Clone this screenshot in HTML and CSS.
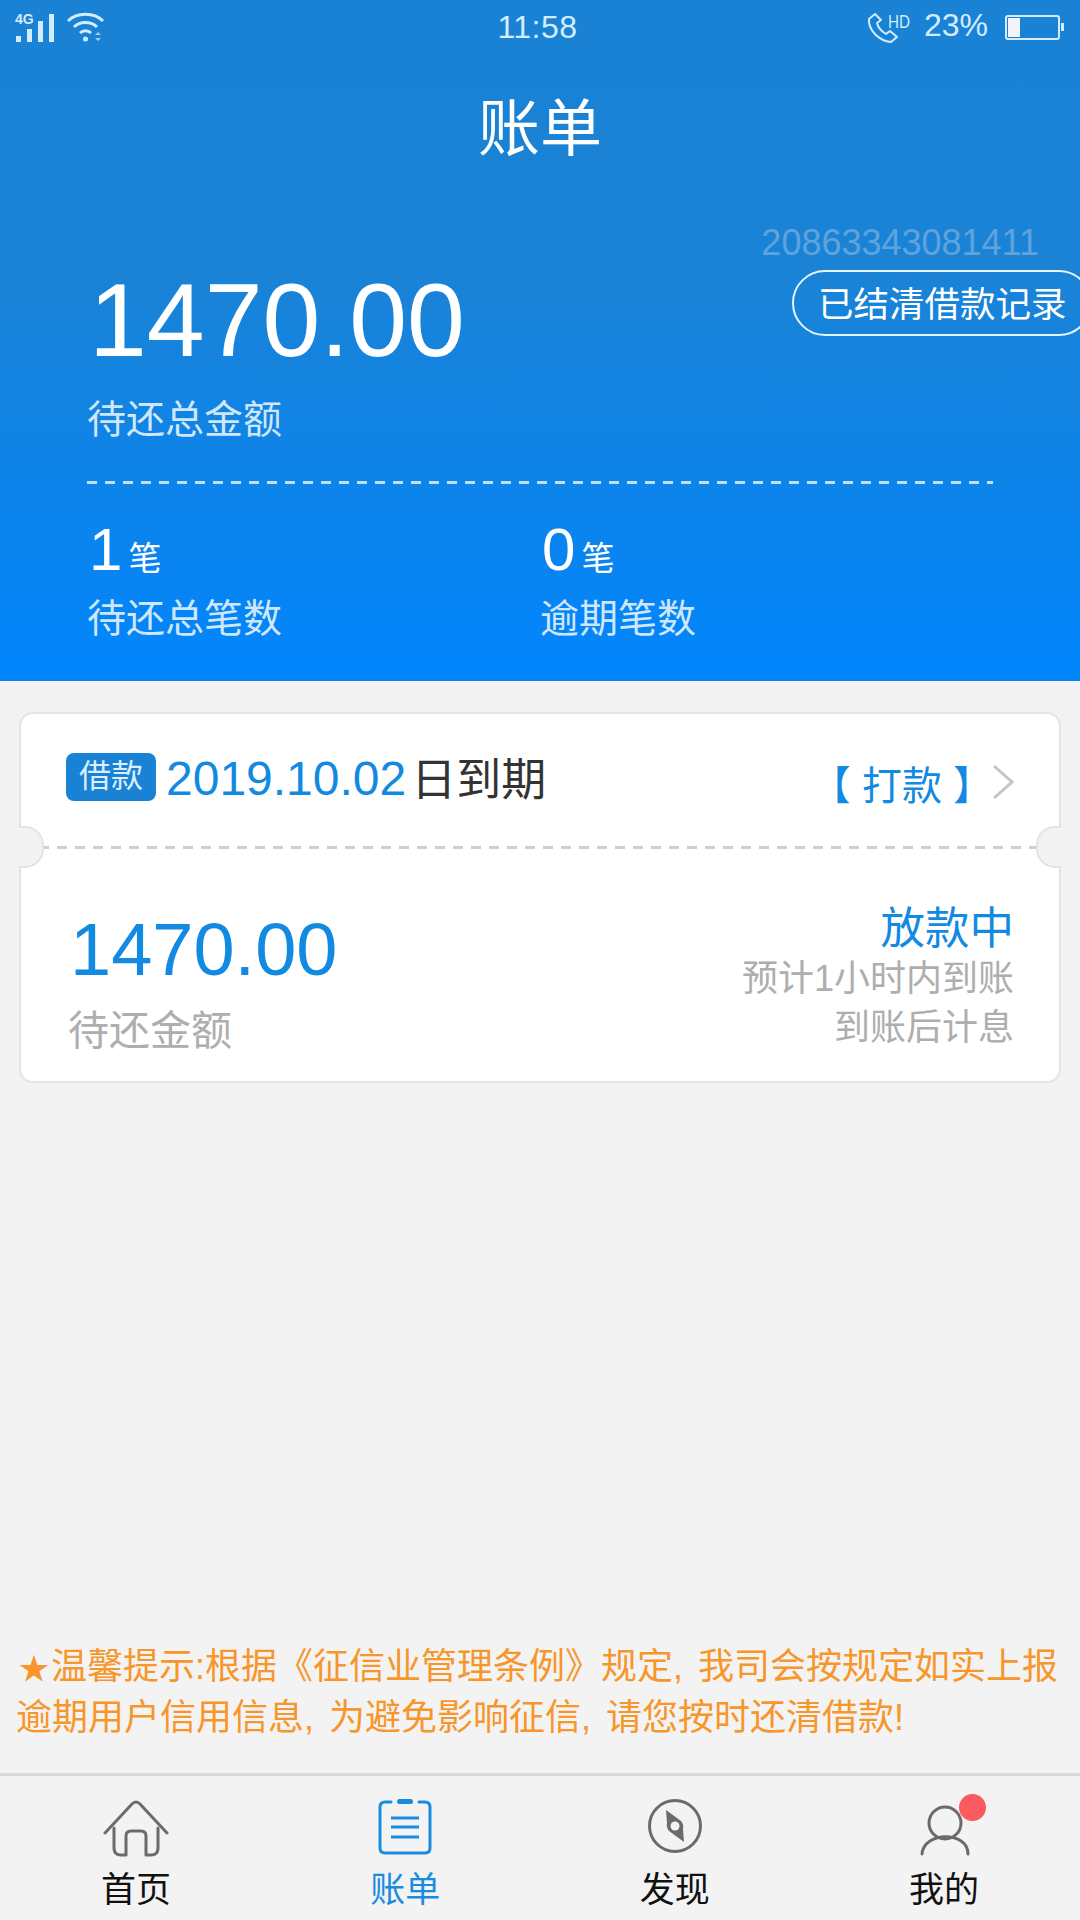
FILE: index.html
```html
<!DOCTYPE html>
<html lang="en">
<head>
<meta charset="UTF-8">
<meta name="viewport" content="width=device-width, initial-scale=1.0">
<title>账单</title>
<link rel="stylesheet" href="styles.css">
</head>
<body>
<div class="page">
    <header class="header">
        <div class="status-bar">
            <div class="status-left">
                <svg width="42" height="32" viewBox="0 0 42 32" fill="#d4ecff">
                    <text x="0" y="12" class="net-label">4G</text>
                    <rect x="1" y="24" width="5" height="6"/>
                    <rect x="12" y="17" width="5" height="13"/>
                    <rect x="23" y="9" width="5" height="21"/>
                    <rect x="34" y="2" width="5" height="28"/>
                </svg>
                <svg class="icon-wifi" width="38" height="32" viewBox="0 0 38 32" fill="none" stroke="#d4ecff" stroke-width="3">
                    <path d="M1 9C10 0 27 0 36 9"/>
                    <path d="M7 15C13 9 24 9 30 15"/>
                    <path d="M13 21C16 18 21 18 24 21"/>
                    <circle cx="18.500" cy="27" r="2.500" fill="#d4ecff" stroke="none"/>
                    <path d="M28 23l3-3 3 3zM28 26l3 3 3-3z" fill="#9fd0f5" stroke="none"/>
                </svg>
            </div>
            <div class="status-time">11:58</div>
            <div class="status-right">
                <svg width="52" height="32" viewBox="0 0 52 32" fill="none" stroke="#d4ecff" stroke-width="2">
                    <path d="M8 2L2 7C1 18 12 29 24 30L30 25L23 19L19 22C14 19 11 15 10 11L14 8Z" stroke-linejoin="round"/>
                    <text x="21" y="16" class="hd-label" textLength="22" lengthAdjust="spacingAndGlyphs">HD</text>
                </svg>
                <span class="battery-text">23%</span>
                <div class="battery"><div class="battery-fill"></div></div>
            </div>
        </div>
        <h1 class="title">账单</h1>
        <div class="hero">
            <div class="hero-left">
                <div class="hero-amount">1470.00</div>
                <div class="label">待还总金额</div>
            </div>
            <div class="hero-right">
                <div class="serial">20863343081411</div>
                <div class="pill">已结清借款记录</div>
            </div>
        </div>
        <div class="dash-line"></div>
        <div class="stats">
            <div class="stat">
                <div class="stat-value"><span class="stat-num">1</span><span class="stat-unit">笔</span></div>
                <div class="label">待还总笔数</div>
            </div>
            <div class="stat">
                <div class="stat-value"><span class="stat-num">0</span><span class="stat-unit">笔</span></div>
                <div class="label">逾期笔数</div>
            </div>
        </div>
    </header>

    <main class="main">
        <div class="card">
            <div class="card-top">
                <span class="tag">借款</span>
                <span class="due-date">2019.10.02</span>
                <span class="due-text">日到期</span>
                <span class="pay">【 打款 】</span>
                <svg class="chevron" width="22" height="36" viewBox="0 0 22 36" fill="none" stroke="#c4c4c4" stroke-width="3">
                    <path d="M2 2L20 18L2 34"/>
                </svg>
            </div>
            <div class="card-split"></div>
            <div class="card-bottom">
                <div>
                    <div class="card-amount">1470.00</div>
                    <div class="card-label">待还金额</div>
                </div>
                <div class="card-state">
                    <div class="state-title">放款中</div>
                    <div class="state-note">预计1小时内到账</div>
                    <div class="state-note">到账后计息</div>
                </div>
            </div>
        </div>
        <p class="notice"><span class="star">★</span>温馨提示:根据《征信业管理条例》规定, 我司会按规定如实上报<br>逾期用户信用信息, 为避免影响征信, 请您按时还清借款!</p>
    </main>

    <nav class="tabbar">
        <div class="tab">
            <svg width="66" height="60" viewBox="0 0 66 60" fill="none" stroke="#6b6b6b" stroke-width="3" stroke-linecap="round" stroke-linejoin="round">
                <path d="M2 35L29 6Q33 2 37 6L64 35"/>
                <path d="M11 30V50Q11 57 18 57H23V38Q23 33 28 33H38Q43 33 43 38V57H48Q55 57 55 50V30"/>
            </svg>
            <span>首页</span>
        </div>
        <div class="tab tab-active">
            <svg width="66" height="60" viewBox="0 0 66 60" fill="none" stroke="#1a8ce0" stroke-width="3" stroke-linecap="round">
                <path d="M19 4H13Q8 4 8 9V50Q8 55 13 55H53Q58 55 58 50V9Q58 4 53 4H47"/>
                <rect x="25" y="1" width="16" height="5" rx="2.500" fill="#1a8ce0" stroke-width="0"/>
                <path d="M19 20H47M19 29H47M19 39H47" stroke-linecap="butt" stroke-width="3"/>
            </svg>
            <span>账单</span>
        </div>
        <div class="tab">
            <svg width="66" height="60" viewBox="0 0 66 60" fill="none" stroke="#6b6b6b" stroke-width="3">
                <circle cx="33" cy="28" r="25.500"/>
                <path d="M24 12L39 23Q42 27 41 31L42 44L27 33Q24 29 25 25Z" fill="#6b6b6b" stroke="none"/>
                <circle cx="33" cy="28" r="4.500" fill="#f3f3f3" stroke="none"/>
            </svg>
            <span>发现</span>
        </div>
        <div class="tab">
            <svg width="66" height="60" viewBox="0 0 66 60" fill="none" stroke="#6b6b6b" stroke-width="3" stroke-linecap="round">
                <circle cx="34" cy="25" r="16"/>
                <path d="M11 56C13 33 57 33 57 56"/>
            </svg>
            <span class="dot"></span>
            <span>我的</span>
        </div>
    </nav>
</div>
</body>
</html>
```

FILE: styles.css
```css
* {
    box-sizing: border-box;
}
html, body {
    margin: 0;
    padding: 0;
}
body {
    background-color: #f3f3f3;
    font-family: "Liberation Sans", "Noto Sans CJK SC", sans-serif;
}
.page {
    width: 1080px;
    height: 1920px;
    display: flex;
    flex-direction: column;
    overflow: hidden;
}

/* blue header */
.header {
    height: 681px;
    padding: 0 0 0 87px;
    background: linear-gradient(180deg, #1a82d4 0%, #1a83d6 40%, #0185fd 100%);
    color: #fff;
}
.status-bar {
    height: 54px;
    margin-left: -87px;
    padding: 12px 20px 0 15px;
    display: flex;
    justify-content: space-between;
    color: #d4ecff;
}
.status-left {
    width: 200px;
    display: flex;
    align-items: flex-start;
}
.net-label {
    font-size: 14px;
    font-weight: bold;
}
.icon-wifi {
    margin-left: 10px;
}
.status-time {
    font-size: 32px;
    line-height: 30px;
    letter-spacing: 0.500px;
}
.status-right {
    width: 200px;
    display: flex;
    justify-content: flex-end;
    align-items: flex-start;
}
.hd-label {
    font-size: 18px;
    fill: #d4ecff;
    stroke: none;
}
.battery-text {
    font-size: 32px;
    line-height: 26px;
    margin: 0 17px 0 5px;
}
.battery {
    width: 55px;
    height: 25px;
    margin-top: 3px;
    padding: 1px;
    border: 2px solid #d4ecff;
    border-radius: 3px;
    position: relative;
}
.battery::after {
    content: "";
    position: absolute;
    right: -6px;
    top: 6px;
    width: 3px;
    height: 8px;
    background-color: #d4ecff;
}
.battery-fill {
    width: 12px;
    height: 100%;
    background-color: #f1f5f9;
}
.title {
    margin: 41px 0 0 -87px;
    font-size: 62px;
    font-weight: 400;
    line-height: 70px;
    text-align: center;
}
.hero {
    margin-top: 58px;
    display: flex;
    justify-content: space-between;
}
.hero-left {
    padding-top: 42px;
}
.hero-amount {
    font-size: 104px;
    line-height: 110px;
    margin-left: 2px;
}
.label {
    font-size: 39px;
    line-height: 50px;
    color: #cfe7fb;
    margin-top: 20px;
}
.hero-right {
    display: flex;
    flex-direction: column;
    align-items: flex-end;
}
.serial {
    font-size: 36px;
    line-height: 40px;
    margin-right: 41px;
    color: #5fa3dc;
}
.pill {
    width: 300px;
    height: 66px;
    margin-top: 7px;
    margin-right: -12px;
    padding-left: 24px;
    border: 2px solid #e8f4ff;
    border-radius: 33px;
    font-size: 35.500px;
    line-height: 66px;
}
.dash-line {
    height: 3px;
    width: 906px;
    margin-top: 36px;
    background: repeating-linear-gradient(90deg, #bfe0fa 0 10px, transparent 10px 18px);
}
.stats {
    margin-top: 21px;
    display: flex;
}
.stat {
    width: 453px;
}
.stat-value {
    height: 90px;
    display: flex;
    align-items: baseline;
}
.stat-num {
    font-size: 60px;
    line-height: 90px;
    margin-left: 2px;
}
.stat-unit {
    font-size: 33px;
    margin-left: 6px;
}
.stat .label {
    margin-top: -1px;
}

/* bill card */
.main {
    flex: 1;
    padding: 31px 19px 0;
    display: flex;
    flex-direction: column;
}
.card {
    height: 371px;
    background-color: #fff;
    border: 2px solid #e4e4e4;
    border-radius: 14px;
    position: relative;
}
.card-top {
    height: 132px;
    padding: 39px 45px 0 45px;
    display: flex;
    align-items: flex-start;
}
.tag {
    width: 90px;
    height: 48px;
    background-color: #1a82d4;
    border-radius: 8px;
    color: #d9eeff;
    font-size: 32px;
    line-height: 46px;
    text-align: center;
}
.due-date {
    margin-left: 10px;
    font-size: 48px;
    line-height: 52px;
    color: #128ae2;
}
.due-text {
    margin-left: 5px;
    margin-top: 2px;
    font-size: 45px;
    line-height: 52px;
    color: #333;
}
.pay {
    margin-left: auto;
    margin-top: 8px;
    font-size: 40px;
    line-height: 50px;
    color: #128ae2;
    white-space: pre;
}
.chevron {
    margin: 11px 0 0 -1px;
}
.card-split {
    height: 3px;
    background: repeating-linear-gradient(90deg, #cfcfcf 0 10px, transparent 10px 18px);
    margin: 0 18px;
}
.card-split::before, .card-split::after {
    content: "";
    position: absolute;
    top: 112px;
    width: 23px;
    height: 38px;
    background-color: #f3f3f3;
    border: 2px solid #e4e4e4;
}
.card-split::before {
    left: -2px;
    border-left: none;
    border-radius: 0 19px 19px 0;
}
.card-split::after {
    right: -2px;
    border-right: none;
    border-radius: 19px 0 0 19px;
}
.card-bottom {
    padding: 38px 45px 0 49px;
    display: flex;
    justify-content: space-between;
}
.card-amount {
    font-size: 74px;
    line-height: 76px;
    margin-top: 25px;
    color: #128ae2;
}
.card-label {
    font-size: 41px;
    line-height: 50px;
    margin: 18px 0 0 -2px;
    color: #aeaeae;
}
.card-state {
    padding-top: 16px;
    text-align: right;
}
.state-title {
    font-size: 44.500px;
    line-height: 51px;
    color: #128ae2;
}
.state-note {
    font-size: 36px;
    line-height: 49px;
    color: #aeaeae;
}

/* warm tip */
.notice {
    margin: auto 0 31px -3px;
    font-size: 36px;
    line-height: 49px;
    word-spacing: 5px;
    color: #f7962a;
    white-space: nowrap;
}
.star {
    margin: 0 2px 0 3px;
    font-size: 30px;
}

/* bottom tabs */
.tabbar {
    height: 147px;
    border-top: 3px solid #dadada;
    display: flex;
    justify-content: space-between;
    padding: 22px 100px 0;
}
.tab {
    width: 72px;
    display: flex;
    flex-direction: column;
    align-items: center;
    gap: 10px;
    font-size: 35px;
    line-height: 44px;
    color: #111;
    position: relative;
}
.tab-active {
    color: #1a8ce0;
}
.dot {
    position: absolute;
    top: -4px;
    right: -6px;
    width: 27px;
    height: 27px;
    border-radius: 50%;
    background-color: #fb5a5e;
}
```
